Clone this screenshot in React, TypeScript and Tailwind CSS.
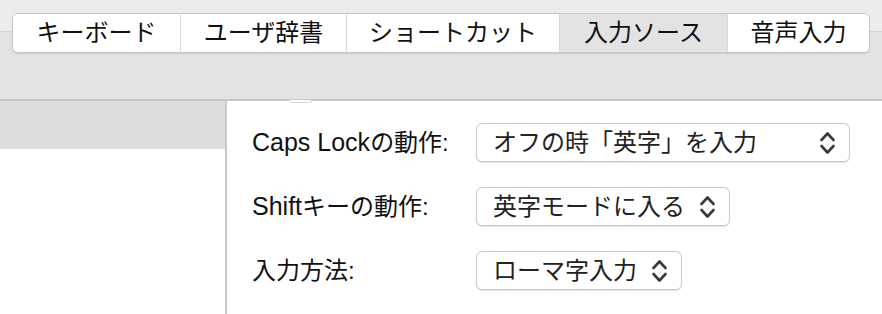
import React from 'react';

const tabs = [
  { label: 'キーボード', w: 'w-[167px]' },
  { label: 'ユーザ辞書', w: 'w-[166px]' },
  { label: 'ショートカット', w: 'w-[213px]' },
  { label: '入力ソース', w: 'w-[168px]', active: true },
  { label: '音声入力', w: 'w-[142px]' },
];

const UpDown = () => (
  <svg width="17" height="26" viewBox="0 0 17 26" fill="none" stroke="#3a3a3a" strokeWidth="2.6" strokeLinecap="round" strokeLinejoin="round">
    <polyline points="2.5,10 8.5,3.5 14.5,10" />
    <polyline points="2.5,16 8.5,22.5 14.5,16" />
  </svg>
);

const Select = ({ value, width }: { value: string; width: string }) => (
  <div
    className={`${width} h-[39px] flex items-center justify-between pl-4 pr-[13px] bg-white border border-[#c9c9c9] rounded-[6px] shadow-[0_1px_1px_rgba(0,0,0,0.12)]`}
  >
    <span className="text-[24px] leading-none text-[#222]">{value}</span>
    <UpDown />
  </div>
);

const rows = [
  { latin: 'Caps Lock', label: 'の動作:', value: 'オフの時「英字」を入力', width: 'w-[374px]' },
  { latin: 'Shift', label: 'キーの動作:', value: '英字モードに入る', width: 'w-[254px]' },
  { latin: '', label: '入力方法:', value: 'ローマ字入力', width: 'w-[206px]' },
];

export default function App() {
  return (
    <div
      className="w-[882px] h-[314px] overflow-hidden bg-white flex flex-col"
      style={{ fontFamily: '"Liberation Sans", "Noto Sans CJK JP", sans-serif' }}
    >
      {/* toolbar */}
      <div className="relative h-[101px] shrink-0 flex flex-col border-b-2 border-[#c6c6c6]">
        <div className="h-[32px] bg-[#ececec] border-b border-[#d4d4d4]" />
        <div className="flex-1 bg-[#e3e3e3]" />
        <div className="absolute left-[12px] top-[13px] flex h-[40px] bg-white border border-[#c6c6c6] rounded-[6px] overflow-hidden shadow-[0_1px_1px_rgba(0,0,0,0.1)]">
          {tabs.map((t, i) => (
            <div
              key={t.label}
              className={`${t.w} flex items-center justify-center text-[24px] leading-none text-[#111] ${
                i > 0 ? 'border-l border-[#dadada]' : ''
              } ${t.active ? 'bg-[#e3e3e3]' : 'bg-white'}`}
            >
              {t.label}
            </div>
          ))}
        </div>
        <div className="absolute left-[289px] -bottom-[4px] w-[23px] h-[3px] border border-t-0 border-[#d8d8d8] rounded-b-full bg-white" />
      </div>

      {/* body */}
      <div className="flex flex-1">
        <div className="w-[227px] shrink-0 border-r-2 border-[#c9c9c9]">
          <div className="h-[48px] bg-[#dcdcdc]" />
        </div>
        <div className="flex-1 pl-[25px] pt-[22px] flex flex-col gap-[25px]">
          {rows.map((r) => (
            <div key={r.label} className="flex items-center">
              <div className="w-[224px] text-[24px] leading-none text-[#111] whitespace-nowrap">
                {r.latin && <span className="text-[25px]">{r.latin}</span>}
                {r.label}
              </div>
              <Select value={r.value} width={r.width} />
            </div>
          ))}
        </div>
      </div>
    </div>
  );
}
